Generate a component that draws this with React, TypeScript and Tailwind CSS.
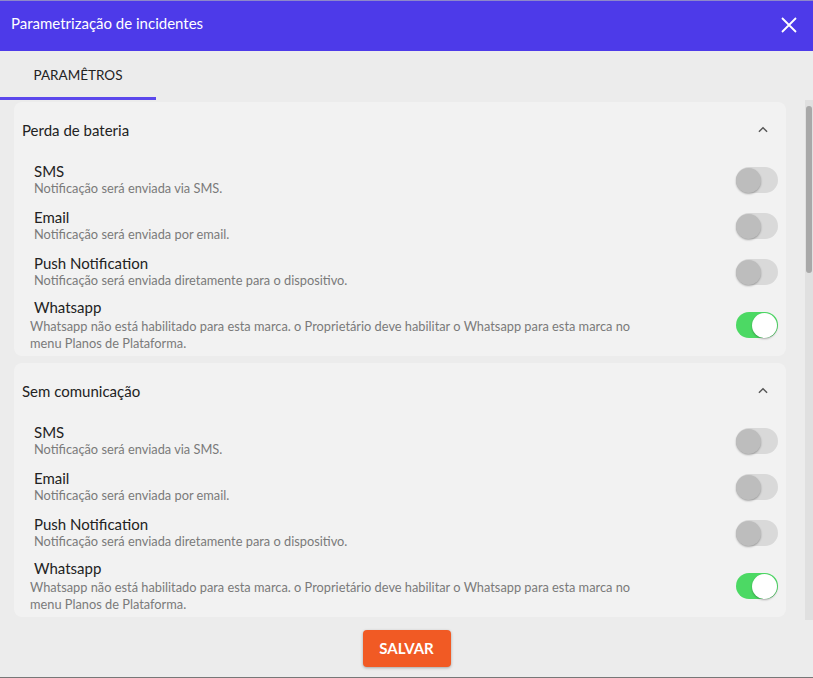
import React from 'react';

type Item = { label: string; desc: string; on?: boolean; wide?: boolean };

const items: Item[] = [
  { label: 'SMS', desc: 'Notificação será enviada via SMS.' },
  { label: 'Email', desc: 'Notificação será enviada por email.' },
  { label: 'Push Notification', desc: 'Notificação será enviada diretamente para o dispositivo.' },
  {
    label: 'Whatsapp',
    desc: 'Whatsapp não está habilitado para esta marca. o Proprietário deve habilitar o Whatsapp para esta marca no menu Planos de Plataforma.',
    on: true,
    wide: true,
  },
];

const Toggle: React.FC<{ on?: boolean; className?: string }> = ({ on, className }) => (
  <div
    className={`w-[42px] h-[26px] rounded-full flex items-center shrink-0 ${
      on ? 'bg-[#4cd964] justify-end pr-[1px]' : 'bg-[#d9d9d9] justify-start'
    } ${className || ''}`}
  >
    <div
      className={`w-[25px] h-[25px] rounded-full shadow-[0_1px_2px_rgba(0,0,0,0.3)] ${
        on ? 'bg-white' : 'bg-[#bdbdbd]'
      }`}
    />
  </div>
);

const Section: React.FC<{ title: string }> = ({ title }) => (
  <div className="bg-[#f2f2f2] rounded-[8px] pb-[4px]">
    <div className="h-[56px] flex items-center justify-between pl-[8px] pr-[16px]">
      <span className="text-[15px] text-[#222]">{title}</span>
      <svg width="14" height="14" viewBox="0 0 24 24" fill="none" stroke="#555" strokeWidth="2.4">
        <path d="M5 15l7-7 7 7" />
      </svg>
    </div>
    <div className="flex flex-col pt-[4px]">
      {items.map((it) =>
        it.wide ? (
          <div key={it.label} className="flex items-center justify-between pr-[8px] mt-[-2px]">
            <div className="flex flex-col">
              <span className="pl-[20px] text-[15px] leading-[18px] text-[#222]">{it.label}</span>
              <span className="pl-[16px] mt-[2px] max-w-[630px] text-[12.8px] leading-[17px] text-[#7a7a7a]">
                {it.desc}
              </span>
            </div>
            <Toggle on={it.on} />
          </div>
        ) : (
          <div key={it.label} className="h-[46px] flex items-start justify-between pr-[8px]">
            <div className="flex flex-col pl-[20px]">
              <span className="text-[15px] leading-[18px] text-[#222]">{it.label}</span>
              <span className="text-[12.8px] leading-[17px] text-[#7a7a7a]">{it.desc}</span>
            </div>
            <Toggle on={it.on} className="mt-[5px]" />
          </div>
        )
      )}
    </div>
  </div>
);

export default function App() {
  return (
    <div
      className="w-[813px] h-[678px] flex flex-col bg-[#ececec] border-b border-[#777] overflow-hidden"
      style={{ fontFamily: 'Lato, "Noto Sans", sans-serif' }}
    >
      <div className="h-[51px] shrink-0 bg-[#4d3ae9] border-t border-[#8d88c9] flex items-center justify-between pl-[11px] pr-[16px]">
        <span className="text-white text-[15px] pb-[6px]">Parametrização de incidentes</span>
        <svg width="16" height="16" viewBox="0 0 16 16" stroke="white" strokeWidth="1.8" className="mb-[2px]">
          <path d="M1 1l14 14M15 1L1 15" />
        </svg>
      </div>
      <div className="h-[49px] shrink-0 flex">
        <div className="w-[156px] flex items-center justify-center border-b-[3px] border-[#5b48ec] pt-[3px]">
          <span className="text-[13.5px] text-[#222]">PARAMÊTROS</span>
        </div>
      </div>
      <div className="flex h-[520px] shrink-0">
        <div className="flex-1 flex flex-col gap-[7px] pl-[14px] pr-[19px] pt-[2px] overflow-hidden">
          <Section title="Perda de bateria" />
          <Section title="Sem comunicação" />
        </div>
        <div className="w-[8px] bg-[#e0e0e0] pt-[6px] flex justify-center">
          <div className="w-[6px] h-[167px] rounded-full bg-[#a8a8a8]" />
        </div>
      </div>
      <div className="flex-1 flex items-start justify-center pt-[10px]">
        <button className="w-[88px] h-[37px] rounded-[4px] bg-[#f15a24] text-white font-bold text-[15px] shadow-[0_1px_3px_rgba(0,0,0,0.3)]">
          SALVAR
        </button>
      </div>
    </div>
  );
}
